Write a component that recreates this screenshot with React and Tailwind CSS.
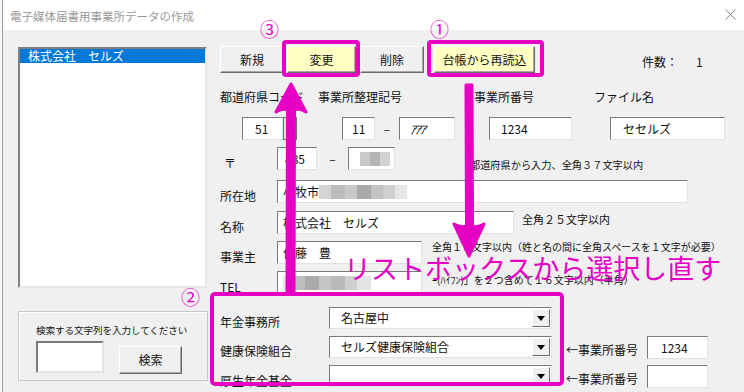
import React from 'react';

const FONT = "font-['Noto_Sans_CJK_JP','Noto_Sans',sans-serif]";

function Btn({ children, className = '' }) {
  return (
    <div className={`flex items-center justify-center h-[27px] border border-t-white border-l-white border-r-[#6a6a6a] border-b-[#6a6a6a] shadow-[inset_-1px_-1px_0_#a8a8a8] text-[12px] leading-[16px] text-[#111] ${className}`}>
      {children}
    </div>
  );
}

function Field({ className = '', children }) {
  return (
    <div className={`h-[23px] flex items-center bg-white border border-t-[#7a7a7a] border-l-[#7a7a7a] border-r-[#e2e2e2] border-b-[#e2e2e2] text-[12px] leading-[16px] text-[#111] overflow-hidden whitespace-pre ${className}`}>
      {children}
    </div>
  );
}

function Blur({ cols }) {
  return (
    <div className="flex h-[14px] blur-[0.6px]">
      {cols.map((c, i) => (
        <div key={i} className="h-full" style={{ width: c[0], background: c[1] }} />
      ))}
    </div>
  );
}

function Combo({ value }) {
  return (
    <div className="w-[223px] h-[22px] flex items-center justify-between bg-white border border-t-[#7a7a7a] border-l-[#7a7a7a] border-r-[#e2e2e2] border-b-[#e2e2e2] pl-[11px] pr-[1px] text-[12px] leading-[16px] text-[#111]">
      <span>{value}</span>
      <div className="w-[18px] h-[18px] flex items-center justify-center bg-[#f0f0f0] border border-t-white border-l-white border-r-[#6a6a6a] border-b-[#6a6a6a]">
        <svg width="8" height="5" viewBox="0 0 8 5"><path d="M0 0h8L4 5z" fill="#000" /></svg>
      </div>
    </div>
  );
}

function Row({ label, labelClass = '', children }) {
  return (
    <div className="flex items-start">
      <div className={`w-[69px] pl-[12px] pt-[8px] text-[12px] leading-[16px] text-[#111] ${labelClass}`}>{label}</div>
      {children}
    </div>
  );
}

export default function App() {
  return (
    <div className={`relative w-[744px] h-[392px] overflow-hidden flex bg-white ${FONT}`}>
      {/* edge of sheet behind */}
      <div className="w-[3px] h-full bg-[#f7f7f7] border-r border-[#9c9c9c]" />

      <div className="flex-1 flex flex-col">
        {/* title bar */}
        <div className="h-[30px] bg-white flex items-center justify-between pl-[7px] pr-[8px]">
          <span className="text-[11.5px] leading-[14px] mt-[2px] text-[#9a9a9a]">電子媒体届書用事業所データの作成</span>
          <svg width="11" height="11" viewBox="0 0 11 11" className="mb-[2px]">
            <path d="M0.5 0.5l10 10M10.5 0.5l-10 10" stroke="#8a8a8a" strokeWidth="1" />
          </svg>
        </div>

        {/* body */}
        <div className="flex-1 bg-[#f0f0f0] flex">
          {/* left column */}
          <div className="w-[205px] pl-[15px] flex flex-col">
            <div className="mt-[17px] w-[189px] h-[241px] bg-white border-2 border-t-[#7f7f7f] border-l-[#7f7f7f] border-r-[#e6e6e6] border-b-[#e6e6e6]">
              <div className="h-[14px] bg-[#0078d7] text-white text-[12px] leading-[14px] pl-[8px]">株式会社　セルズ</div>
            </div>
            <div className="mt-[23px] w-[190px] h-[70px] border border-[#c6c6c6] shadow-[inset_1px_1px_0_#fff] pl-[17px] pt-[11px]">
              <div className="text-[9.6px] leading-[14px] text-[#111] tracking-[-0.1px]">検索する文字列を入力してください</div>
              <div className="flex items-start mt-[4px]">
                <div className="w-[68px] h-[32px] bg-white border-2 border-t-[#7a7a7a] border-l-[#7a7a7a] border-r-[#e2e2e2] border-b-[#e2e2e2]" />
                <Btn className="ml-[15px] mt-[5px] w-[63px] h-[28px]">検索</Btn>
              </div>
            </div>
          </div>

          {/* right column (x = 208) */}
          <div className="flex-1 flex flex-col">
            <div className="mt-[16px] ml-[12px] flex items-center">
              <Btn className="w-[64px] bg-[#f0f0f0]">新規</Btn>
              <Btn className="ml-[3px] w-[69px] bg-[#ffffc4]">変更</Btn>
              <Btn className="ml-[4px] w-[64px] bg-[#f0f0f0]">削除</Btn>
              <Btn className="ml-[10px] w-[101px] bg-[#ffffc4]">台帳から再読込</Btn>
              <span className="ml-[107px] mt-[5px] text-[12px] leading-[16px] text-[#111]">件数：</span>
              <span className="ml-[18px] mt-[5px] text-[12px] leading-[16px] text-[#111]">1</span>
            </div>

            <div className="mt-[16px] ml-[12px] flex text-[12px] leading-[16px] text-[#111]">
              <span className="w-[98px] whitespace-nowrap">都道府県コード</span>
              <span className="w-[156px]">事業所整理記号</span>
              <span className="w-[120px]">事業所番号</span>
              <span>ファイル名</span>
            </div>

            <div className="mt-[12px] ml-[34px] flex items-center">
              <Field className="w-[41px] pl-[12px]">51</Field>
              <div className="w-[14px] h-[23px] bg-[#e4e4e4] border border-[#6e6e6e]" />
              <Field className="ml-[45px] w-[33px] pl-[9px]">11</Field>
              <span className="w-[24px] text-center text-[12px] text-[#111]">–</span>
              <Field className="w-[56px] pl-[10px]"><span className="italic tracking-[-1px]">ｱｱｱ</span></Field>
              <Field className="ml-[34px] w-[83px] pl-[11px]">1234</Field>
              <Field className="ml-[38px] w-[115px] pl-[12px]">セセルズ</Field>
            </div>

            <div className="mt-[7px]">
              <Row label="〒" labelClass="pl-[16px]">
                <Field className="w-[40px] pl-[7px]">485</Field>
                <span className="w-[31px] pt-[3px] text-center text-[12px] text-[#111]">–</span>
                <Field className="w-[47px] pl-[11px]">
                  <Blur cols={[[10, '#c9c9c9'], [10, '#b4b4b4'], [10, '#d2d2d2']]} />
                </Field>
                <span className="ml-[75px] mt-[11px] text-[10.2px] leading-[14px] text-[#111] whitespace-nowrap">都道府県から入力、全角３７文字以内</span>
              </Row>
            </div>

            <div className="mt-[8px]">
              <Row label="所在地">
                <Field className="w-[411px] pl-[5px]">
                  <span>小牧市</span>
                  <Blur cols={[[12, '#d4d4d4'], [14, '#bdbdbd'], [12, '#c9c9c9'], [14, '#a9a9a9'], [12, '#c2c2c2'], [12, '#d0d0d0'], [12, '#e6e6e6']]} />
                </Field>
              </Row>
            </div>

            <div className="mt-[7px]">
              <Row label="名称">
                <Field className="w-[237px] pl-[5px]">株式会社　セルズ</Field>
                <span className="ml-[8px] mt-[1px] text-[11px] leading-[14px] text-[#111]">全角２５文字以内</span>
              </Row>
            </div>

            <div className="mt-[6px]">
              <Row label="事業主">
                <Field className="w-[145px] pl-[5px]">佐藤　豊</Field>
                <span className="ml-[10px] mt-[0px] text-[10px] leading-[12px] text-[#111] whitespace-nowrap">全角１２文字以内（姓と名の間に全角スペースを１文字が必要）</span>
              </Row>
            </div>

            <div className="mt-[6px]">
              <Row label="TEL" labelClass="pt-[6px]">
                <Field className="w-[145px] pl-[5px]">
                  <Blur cols={[[8, '#e8e8e8'], [14, '#bdbdbd'], [14, '#ababab'], [12, '#c4c4c4'], [14, '#b9b9b9'], [12, '#cfcfcf'], [14, '#e4e4e4']]} />
                </Field>
                <span className="ml-[10px] mt-[3px] text-[10px] leading-[12px] text-[#111] whitespace-nowrap">ｰ(ﾊｲﾌﾝ)」を２つ含めて１６文字以内（半角）</span>
              </Row>
            </div>

            {/* insurance section */}
            <div className="mt-[12px] ml-[12px] flex flex-col gap-[6px] text-[12px] leading-[16px] text-[#111]">
              <div className="flex items-start">
                <span className="w-[109px] pt-[7px]">年金事務所</span>
                <Combo value="名古屋中" />
              </div>
              <div className="flex items-start">
                <span className="w-[109px] pt-[7px]">健康保険組合</span>
                <Combo value="セルズ健康保険組合" />
                <span className="ml-[14px] pt-[6px] w-[81px]">←事業所番号</span>
                <Field className="w-[61px] h-[22px] pl-[13px]">1234</Field>
              </div>
              <div className="flex items-start">
                <span className="w-[109px] pt-[8px]">厚生年金基金</span>
                <Combo value="" />
                <span className="ml-[14px] pt-[6px] w-[81px]">←事業所番号</span>
                <Field className="w-[61px] h-[22px]" />
              </div>
            </div>
          </div>
        </div>
      </div>

      {/* annotations */}
      <div className="absolute left-[282px] top-[40px] w-[78px] h-[37px] border-4 border-[#e600c4] rounded-[4px]" />
      <div className="absolute left-[427px] top-[40px] w-[117px] h-[37px] border-4 border-[#e600c4] rounded-[4px]" />
      <div className="absolute left-[210px] top-[292px] w-[354px] h-[94px] border-4 border-[#e600c4] rounded-[5px]" />

      <span className="absolute left-[260px] top-[17px] text-[19px] leading-[24px] text-[#e600c4]">③</span>
      <span className="absolute left-[430px] top-[17px] text-[19px] leading-[24px] text-[#e600c4]">①</span>
      <span className="absolute left-[181px] top-[285px] text-[19px] leading-[24px] text-[#e600c4]">②</span>

      <svg className="absolute left-0 top-0 pointer-events-none" width="744" height="392" viewBox="0 0 744 392">
        <path d="M291 84 L306 112 Q299 108 294.5 110 L294 293 L287 293 L287.5 110 Q283 108 276 112 Z" fill="#e600c4" stroke="#e600c4" strokeWidth="3" strokeLinejoin="round" />
        <path d="M469 256 L484 224 Q477 228 472.5 226 L472 85 L466 85 L466.5 226 Q461 228 454 224 Z" fill="#e600c4" stroke="#e600c4" strokeWidth="3" strokeLinejoin="round" />
      </svg>

      <span className="absolute left-[344px] top-[252px] text-[27px] leading-[32px] text-[#e600c4] whitespace-nowrap">リストボックスから選択し直す</span>
    </div>
  );
}
